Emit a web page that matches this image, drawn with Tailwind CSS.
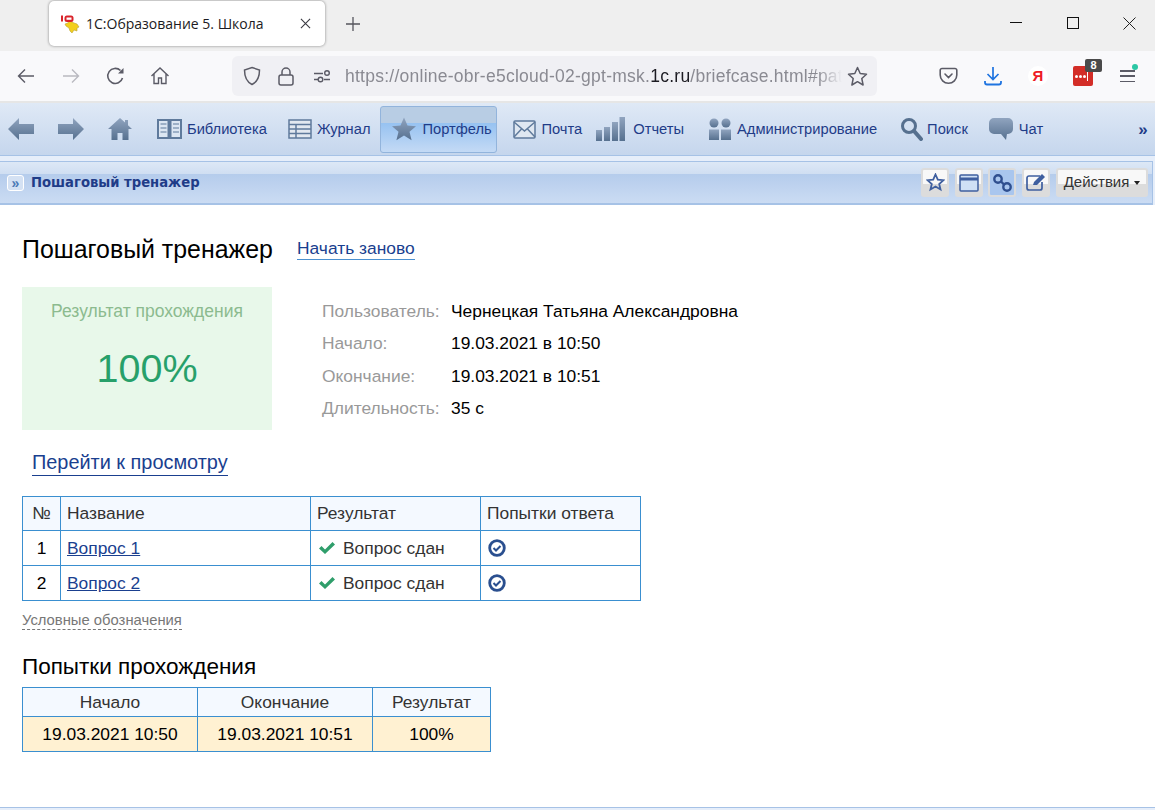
<!DOCTYPE html>
<html lang="ru">
<head>
  <meta charset="UTF-8" />
  <meta name="viewport" content="width=device-width, initial-scale=1" />
  <title>1С:Образование 5. Школа</title>
  <script src="https://cdn.jsdelivr.net/npm/@tailwindcss/browser@4"></script>
</head>
<body class="h-[810px] w-[1155px] overflow-hidden bg-[#e6eefa] font-['Liberation_Sans',sans-serif]">

  <!-- shared gradient for the grey-blue nav icons -->
  <svg class="absolute h-0 w-0">
    <defs>
      <linearGradient id="ico" x1="0" y1="0" x2="0" y2="1">
        <stop offset="0" stop-color="#90a4bf"/>
        <stop offset="1" stop-color="#56708f"/>
      </linearGradient>
    </defs>
  </svg>

  <!-- browser tabs -->
  <div class="flex h-[51px] items-start bg-[#efefef]">
    <div class="ml-[49px] mt-[1px] flex h-[45px] w-[276px] items-center rounded-[5px] bg-white pl-[11px] shadow-[0_0_3px_rgba(0,0,0,0.45)]">
      <svg class="h-[20px] w-[20px]" viewBox="0 0 20 20">
        <path d="M5 10l3-1 1-2 3 1 2 1 3 1 2 3-2 1v3l-3-1-2 3-2-2-1-3-3-2z" fill="#f3cf1d" stroke="#b9a235" stroke-width=".6"/>
        <rect x="1" y="1.500" width="2" height="6" fill="#d9232a"/>
        <rect x="4.500" y="1.500" width="9" height="6.500" rx="2.500" fill="#d9232a"/>
        <rect x="6.500" y="3.500" width="5" height="2.300" fill="#fff"/>
      </svg>
      <span class="ml-[6px] w-[214px] font-['Open_Sans',sans-serif] text-[14px] text-[#1c1b22]">1С:Образование 5. Школа</span>
      <svg class="h-[11px] w-[11px]" viewBox="0 0 12 12" fill="none" stroke="#3a3a42" stroke-width="1.200"><path d="M1 1l10 10M11 1L1 11"/></svg>
    </div>
    <svg class="ml-[20px] mt-[16px] h-[16px] w-[16px]" viewBox="0 0 16 16" fill="none" stroke="#55555c" stroke-width="1.300"><path d="M8 1v14M1 8h14"/></svg>
    <svg class="ml-[649px] mt-[22px] h-[2px] w-[12px]" viewBox="0 0 12 2"><rect width="12" height="1" fill="#111"/></svg>
    <div class="ml-[45px] mt-[17px] h-[12px] w-[12px] border border-[#111]"></div>
    <svg class="ml-[44px] mt-[17px] h-[13px] w-[13px]" viewBox="0 0 13 13" fill="none" stroke="#222" stroke-width="1"><path d="M.5.500l12 12M12.500.500l-12 12"/></svg>
  </div>

  <!-- browser toolbar -->
  <div class="flex h-[50px] items-center bg-[#f9f9fb]">
    <svg class="ml-[17px] h-[18px] w-[18px]" viewBox="0 0 18 18" fill="none" stroke="#5b5b66" stroke-width="1.400"><path d="M17 9H1.500M8 2.500L1.500 9 8 15.500"/></svg>
    <svg class="ml-[27px] h-[18px] w-[18px]" viewBox="0 0 18 18" fill="none" stroke="#b9b9c0" stroke-width="1.400"><path d="M1 9h15.500M10 2.500L16.500 9 10 15.500"/></svg>
    <svg class="ml-[26px] h-[20px] w-[20px]" viewBox="0 0 20 20" fill="none" stroke="#5b5b66" stroke-width="1.600"><path d="M16.500 12a7.500 7.500 0 1 1-2-7.500"/><path d="M17.500 2v5.500H12z" fill="#5b5b66" stroke="none"/></svg>
    <svg class="ml-[24px] h-[20px] w-[20px]" viewBox="0 0 20 20" fill="none" stroke="#5b5b66" stroke-width="1.400"><path d="M1.500 10L10 2l8.500 8M4 8v9.500h4.500V12h3v5.500H16V8"/></svg>
    <div class="ml-[62px] flex h-[40px] w-[645px] items-center rounded-[6px] bg-[#f0f0f4] pl-[10px]">
      <svg class="h-[20px] w-[20px]" viewBox="0 0 20 20" fill="none" stroke="#5b5b66" stroke-width="1.500"><path d="M10 1.500l7.500 2.500c0 7-1.500 11.500-7.500 14.500C4 15.500 2.500 11 2.500 4z"/></svg>
      <svg class="ml-[15px] h-[20px] w-[18px]" viewBox="0 0 18 20" fill="none" stroke="#5b5b66" stroke-width="1.500"><rect x="2" y="9" width="14" height="10" rx="2"/><path d="M5 9V6a4 4 0 0 1 8 0v3"/></svg>
      <svg class="ml-[18px] h-[14px] w-[18px]" viewBox="0 0 18 14" fill="none" stroke="#5b5b66" stroke-width="1.400"><path d="M1 4.500h9M1 10.500h4M11 10.500h6"/><circle cx="14" cy="4" r="2.300"/><circle cx="7.500" cy="10.500" r="2.300"/></svg>
      <div class="ml-[14px] w-[497px] overflow-hidden whitespace-nowrap text-[17.500px] tracking-[0.25px] text-[#8a8a92] [mask-image:linear-gradient(to_right,black_95%,transparent)]">https://online-obr-e5cloud-02-gpt-msk.<span class="text-[#1c1b22]">1c.ru</span>/briefcase.html#path</div>
      <svg class="ml-[5px] h-[21px] w-[21px]" viewBox="0 0 21 21" fill="none" stroke="#5b5b66" stroke-width="1.500" stroke-linejoin="round"><path d="M10.500 1.500l2.700 6 6.300.7-4.700 4.300 1.300 6.500-5.600-3.300-5.600 3.300 1.300-6.500L1.500 8.200l6.300-.7z"/></svg>
    </div>
    <svg class="ml-[62px] h-[18px] w-[19px]" viewBox="0 0 19 18" fill="none" stroke="#5b5b66" stroke-width="1.600"><path d="M3 1.500h13A1.800 1.800 0 0 1 17.800 3.300V8a8.300 8.300 0 0 1-16.600 0V3.300A1.800 1.800 0 0 1 3 1.500z"/><path d="M6 7l3.500 3.500L13 7" stroke-linecap="round"/></svg>
    <svg class="ml-[26px] h-[20px] w-[18px]" viewBox="0 0 18 20" fill="none" stroke="#1f74e0" stroke-width="1.700"><path d="M9 1v12M3.500 8L9 13.500 14.500 8"/><path d="M1 15v1.500A2 2 0 0 0 3 18.500h12a2 2 0 0 0 2-2V15" stroke-width="1.800"/></svg>
    <div class="ml-[26px] flex h-[20px] w-[20px] items-center justify-center rounded-full bg-white text-[15px] font-bold text-[#ee1c25]">Я</div>
    <div class="relative ml-[25px] flex h-[20px] w-[20px] items-center rounded-[2px] bg-[#d32d27] pl-[2px]">
      <span class="h-[3px] w-[3px] rounded-full bg-white"></span>
      <span class="ml-[1px] h-[3px] w-[3px] rounded-full bg-white"></span>
      <span class="ml-[1px] h-[3px] w-[3px] rounded-full bg-white"></span>
      <span class="ml-[1px] h-[9px] w-[1px] bg-white"></span>
      <span class="absolute left-[12px] top-[-7px] flex h-[13px] w-[17px] items-center justify-center rounded-[2px] bg-[#4a4a4a] text-[11px] font-bold leading-none text-white">8</span>
    </div>
    <div class="relative ml-[27px] flex h-[12px] w-[15px] flex-col justify-between">
      <span class="h-[1.500px] w-[15px] bg-[#5b5b66]"></span>
      <span class="h-[1.500px] w-[15px] bg-[#5b5b66]"></span>
      <span class="h-[1.500px] w-[15px] bg-[#5b5b66]"></span>
      <span class="absolute right-[-3px] top-[-6px] h-[6px] w-[6px] rounded-full bg-[#2bc7a4]"></span>
    </div>
  </div>

  <!-- app navigation -->
  <div class="flex h-[55px] items-center border-t-2 border-b border-t-[#e6e6e6] border-b-[#a6c2e6] bg-linear-to-b from-[#dfe9f6] to-[#c5d6ed] text-[14.700px] text-[#1f3c88]">
    <svg class="ml-[8px] h-[22px] w-[26px]" viewBox="0 0 26 22"><path d="M0 11L11 0v6h15v10H11v6z" fill="url(#ico)"/></svg>
    <svg class="ml-[24px] h-[22px] w-[26px]" viewBox="0 0 26 22"><path d="M26 11L15 0v6H0v10h15v6z" fill="url(#ico)"/></svg>
    <svg class="ml-[24px] h-[22px] w-[24px]" viewBox="0 0 24 22"><path d="M12 0L0 11h3.500v11h6v-7h5v7h6V11H24l-4-3.700V2h-3v2.500z" fill="url(#ico)"/></svg>
    <svg class="ml-[25px] h-[22px] w-[25px]" viewBox="0 0 25 22" fill="#dce6f2" stroke="#5f7a9c" stroke-width="2"><path d="M1 2h10.500v18H1zM13.500 2H24v18H13.500z"/><path d="M3.500 6h6M3.500 10h6M3.500 14h6M16 6h6M16 10h6M16 14h6" stroke-width="1.200"/></svg>
    <span class="ml-[5px]">Библиотека</span>
    <svg class="ml-[21px] h-[20px] w-[24px]" viewBox="0 0 24 20" fill="#e2e8f0" stroke="#5f7a9c" stroke-width="1.500"><path d="M1 1h22v18H1zM1 5.500h22M1 10h22M1 14.500h22M8 5.500V19"/></svg>
    <span class="ml-[5px]">Журнал</span>
    <div class="ml-[10px] flex h-[47px] w-[117px] items-center rounded-[3px] border border-[#92b4dc] bg-[linear-gradient(#b8cde4_0,#b8cde4_35%,#96c2f1_35%,#c4daf5_100%)] pl-[11px]">
      <svg class="h-[24px] w-[24px]" viewBox="0 0 24 24"><path d="M12 .5l3.500 8 8.500.7-6.500 5.600 2.100 8.500L12 18.500l-7.600 4.800 2.100-8.500L0 9.200l8.500-.7z" fill="url(#ico)"/></svg>
      <span class="ml-[6px]">Портфель</span>
    </div>
    <svg class="ml-[16px] h-[19px] w-[23px]" viewBox="0 0 23 19" fill="#dfe7f1" stroke="#5f7a9c" stroke-width="1.500"><rect x="1" y="1" width="21" height="17" rx="1"/><path d="M1 2l10.500 9L22 2M1 17l7.500-8M22 17l-7.500-8" fill="none"/></svg>
    <span class="ml-[5px]">Почта</span>
    <svg class="ml-[14px] h-[24px] w-[29px]" viewBox="0 0 29 24" fill="url(#ico)"><rect x="0" y="13" width="6" height="11"/><rect x="8" y="10" width="6" height="14"/><rect x="16" y="5" width="6" height="19"/><rect x="23.500" y="0" width="5.500" height="24"/></svg>
    <span class="ml-[8px]">Отчеты</span>
    <svg class="ml-[24px] h-[22px] w-[24px]" viewBox="0 0 24 22" fill="url(#ico)"><circle cx="6" cy="5" r="4.500"/><circle cx="18" cy="5" r="4.500"/><path d="M1 11.500h10V22H1zM13 11.500h10V22H13z"/></svg>
    <span class="ml-[5px]">Администрирование</span>
    <svg class="ml-[23px] h-[24px] w-[23px]" viewBox="0 0 23 24" fill="none"><circle cx="9" cy="9" r="6.500" stroke="#56708f" stroke-width="3"/><path d="M14 14l7 8" stroke="#56708f" stroke-width="4" stroke-linecap="round"/></svg>
    <span class="ml-[4px]">Поиск</span>
    <svg class="ml-[21px] h-[22px] w-[24px]" viewBox="0 0 24 22"><path d="M5 0h14a5 5 0 0 1 5 5v6a5 5 0 0 1-5 5h-1l-1 6-5-6H5a5 5 0 0 1-5-5V5a5 5 0 0 1 5-5z" fill="url(#ico)"/></svg>
    <span class="ml-[6px]">Чат</span>
    <span class="ml-[95px] text-[17px] font-bold leading-none">»</span>
  </div>

  <!-- panel -->
  <div class="pt-[5px]">
    <div class="mr-[2px] flex h-[44px] items-center border-t border-r border-b-2 border-[#a6c2e6] bg-[linear-gradient(#dde8f6_0,#cfdef2_30%,#b5ccec_30%,#cbdcf3_100%)] pl-[7px] pr-[4px]">
      <div class="flex h-[16px] w-[17px] items-center justify-center rounded-[3px] border border-white bg-[#d4e1f3] text-[14px] font-bold leading-none text-[#4b78b5]">»</div>
      <span class="ml-[7px] mt-[1px] font-['DejaVu_Sans',sans-serif] text-[13.200px] font-bold text-[#1f3c88]">Пошаговый тренажер</span>
      <button class="ml-auto flex h-[29px] w-[28px] items-center justify-center rounded-[3px] border-2 border-[#dcdcdc] bg-[linear-gradient(#f8f8f8_55%,#dcdcdc_55%)]">
        <svg class="h-[19px] w-[19px]" viewBox="0 0 19 19" fill="none" stroke="#3f5f9f" stroke-width="1.800"><path d="M9.500 1.500l2.300 5.200 5.700.5-4.300 3.800 1.300 5.500-5-3-5 3 1.300-5.500-4.300-3.800 5.700-.5z"/></svg>
      </button>
      <button class="ml-[6px] flex h-[29px] w-[28px] items-center justify-center rounded-[3px] border-2 border-[#dcdcdc] bg-[linear-gradient(#f8f8f8_55%,#dcdcdc_55%)]">
        <svg class="h-[18px] w-[20px]" viewBox="0 0 20 18" fill="#cfe0f5" stroke="#3f5f9f" stroke-width="1.500"><rect x="1" y="1" width="18" height="16" rx="1"/><path d="M1 5h18" stroke-width="3"/></svg>
      </button>
      <button class="ml-[5px] flex h-[29px] w-[28px] items-center justify-center rounded-[3px] border-2 border-[#dcdcdc] bg-[#a9c6ee]">
        <svg class="h-[20px] w-[21px]" viewBox="0 0 21 20" fill="none" stroke="#2f4f8f" stroke-width="2.400"><circle cx="6" cy="6" r="3.700"/><circle cx="15" cy="14" r="3.700"/><path d="M9 8.500l3 3"/></svg>
      </button>
      <button class="ml-[6px] flex h-[29px] w-[28px] items-center justify-center rounded-[3px] border-2 border-[#dcdcdc] bg-[linear-gradient(#f8f8f8_55%,#dcdcdc_55%)]">
        <svg class="h-[19px] w-[21px]" viewBox="0 0 21 19" fill="none" stroke="#3f5f9f" stroke-width="1.700"><path d="M14 3H3a2 2 0 0 0-2 2v10a2 2 0 0 0 2 2h11a2 2 0 0 0 2-2V9"/><path d="M7 12l1-3 8-8 3 3-8 8z" fill="#3f5f9f" stroke="none"/></svg>
      </button>
      <button class="ml-[6px] flex h-[29px] w-[92px] items-center justify-center rounded-[3px] border-2 border-[#dcdcdc] bg-[linear-gradient(#f8f8f8_55%,#dcdcdc_55%)] text-[15px] text-[#333]">
        Действия
        <span class="ml-[5px] mt-[1px] h-0 w-0 border-x-[3.500px] border-t-[4px] border-x-transparent border-t-[#222]"></span>
      </button>
    </div>

    <!-- content -->
    <div class="h-[603px] border-b border-[#a6c2e6] bg-white px-[22px] pt-[30px]">
      <div class="flex h-[28px] items-center">
        <h1 class="w-[275px] whitespace-nowrap text-[24.900px] leading-none text-black">Пошаговый тренажер</h1>
        <a class="border-b border-[#4a90d0] text-[17.400px] leading-[21px] text-[#1a3f8f]" href="#">Начать заново</a>
      </div>

      <div class="mt-[24px] flex">
        <div class="h-[143px] w-[250px] bg-[#e8f8ea] pt-[14px] text-center">
          <div class="text-[17.500px] leading-[20px] text-[#8cbb8f]">Результат прохождения</div>
          <div class="mt-[24px] text-[39.500px] leading-[46px] text-[#27a06a]">100%</div>
        </div>
        <div class="ml-[50px] mt-[8px] grid h-[130px] grid-cols-[129px_1fr] content-start auto-rows-[32.300px] items-center text-[17.400px] text-black">
          <span class="text-[#999]">Пользователь:</span><span>Чернецкая Татьяна Александровна</span>
          <span class="text-[#999]">Начало:</span><span>19.03.2021 в 10:50</span>
          <span class="text-[#999]">Окончание:</span><span>19.03.2021 в 10:51</span>
          <span class="text-[#999]">Длительность:</span><span>35 с</span>
        </div>
      </div>

      <a class="ml-[10px] mt-[20px] inline-block border-b border-[#1a3f8f] text-[19.900px] leading-[25px] text-[#1a3f8f]" href="#">Перейти к просмотру</a>

      <table class="mt-[20px] w-[618px] table-fixed border-collapse text-[17.400px]">
        <colgroup><col class="w-[38px]"><col class="w-[250px]"><col class="w-[170px]"><col class="w-[160px]"></colgroup>
        <tr class="h-[34px] bg-[#f4f9ff] text-left text-[#333]">
          <th class="border border-[#3a8fd0] text-center font-normal">№</th>
          <th class="border border-[#3a8fd0] pl-[6px] font-normal">Название</th>
          <th class="border border-[#3a8fd0] pl-[6px] font-normal">Результат</th>
          <th class="border border-[#3a8fd0] pl-[6px] font-normal">Попытки ответа</th>
        </tr>
        <tr class="h-[35px]">
          <td class="border border-[#3a8fd0] text-center text-black">1</td>
          <td class="border border-[#3a8fd0] pl-[6px]"><a class="underline text-[#1a3f8f]" href="#">Вопрос 1</a></td>
          <td class="border border-[#3a8fd0] pl-[8px] text-[#333]">
            <div class="flex items-center">
              <svg class="h-[12px] w-[16px]" viewBox="0 0 16 12"><path d="M0 6.500l2.500-2.500 3.500 3.500L13.500 0 16 2.500 6 12z" fill="#2f9e6b"/></svg>
              <span class="ml-[8px]">Вопрос сдан</span>
            </div>
          </td>
          <td class="border border-[#3a8fd0] pl-[7px]">
            <svg class="h-[18px] w-[18px]" viewBox="0 0 18 18" fill="none" stroke="#2a4f8f"><circle cx="9" cy="9" r="7.300" stroke-width="2.800"/><path d="M5.500 9l2.500 2.500 4.500-4.500" stroke-width="2"/></svg>
          </td>
        </tr>
        <tr class="h-[35px]">
          <td class="border border-[#3a8fd0] text-center text-black">2</td>
          <td class="border border-[#3a8fd0] pl-[6px]"><a class="underline text-[#1a3f8f]" href="#">Вопрос 2</a></td>
          <td class="border border-[#3a8fd0] pl-[8px] text-[#333]">
            <div class="flex items-center">
              <svg class="h-[12px] w-[16px]" viewBox="0 0 16 12"><path d="M0 6.500l2.500-2.500 3.500 3.500L13.500 0 16 2.500 6 12z" fill="#2f9e6b"/></svg>
              <span class="ml-[8px]">Вопрос сдан</span>
            </div>
          </td>
          <td class="border border-[#3a8fd0] pl-[7px]">
            <svg class="h-[18px] w-[18px]" viewBox="0 0 18 18" fill="none" stroke="#2a4f8f"><circle cx="9" cy="9" r="7.300" stroke-width="2.800"/><path d="M5.500 9l2.500 2.500 4.500-4.500" stroke-width="2"/></svg>
          </td>
        </tr>
      </table>

      <div class="mt-[11px] inline-block border-b border-dashed border-[#777] text-[14.800px] leading-[17px] text-[#777]">Условные обозначения</div>

      <h2 class="mt-[22px] text-[22.500px] font-normal leading-[26px] text-black">Попытки прохождения</h2>

      <table class="mt-[7px] w-[468px] table-fixed border-collapse text-center text-[17.400px]">
        <colgroup><col class="w-[175px]"><col class="w-[175px]"><col class="w-[118px]"></colgroup>
        <tr class="h-[29px] bg-[#f4f9ff] text-[#333]">
          <th class="border border-[#3a8fd0] font-normal">Начало</th>
          <th class="border border-[#3a8fd0] font-normal">Окончание</th>
          <th class="border border-[#3a8fd0] font-normal">Результат</th>
        </tr>
        <tr class="h-[35px] bg-[#fff1d2] text-black">
          <td class="border border-[#3a8fd0]">19.03.2021 10:50</td>
          <td class="border border-[#3a8fd0]">19.03.2021 10:51</td>
          <td class="border border-[#3a8fd0]">100%</td>
        </tr>
      </table>
    </div>
  </div>
</body>
</html>
